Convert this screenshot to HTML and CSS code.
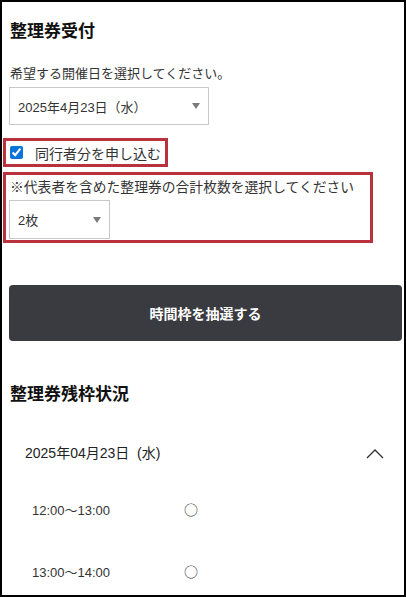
FILE: index.html
```html
<!DOCTYPE html>
<html lang="ja">
<head>
<meta charset="utf-8">
<title>整理券受付</title>
<link rel="stylesheet" href="styles.css">
</head>
<body>
<div class="frame">
  <h2 class="title">整理券受付</h2>
  <p class="label">希望する開催日を選択してください。</p>
  <div class="select date-select">
    <span>2025年4月23日（水）</span>
    <span class="arrow"></span>
  </div>

  <label class="redbox check-box">
    <input type="checkbox" checked>
    <span class="check-text">同行者分を申し込む</span>
  </label>

  <div class="redbox count-box">
    <p class="count-label">※代表者を含めた整理券の合計枚数を選択してください</p>
    <div class="select count-select">
      <span>2枚</span>
      <span class="arrow"></span>
    </div>
  </div>

  <button class="draw-btn">時間枠を抽選する</button>

  <h2 class="title title2">整理券残枠状況</h2>

  <div class="acc-head">
    <span>2025年04月23日&nbsp;&nbsp;(水)</span>
    <svg class="chev" width="18" height="11" viewBox="0 0 18 11"><polyline points="1,10 9,2 17,10" fill="none" stroke="#333" stroke-width="1.3"/></svg>
  </div>
  <div class="slots">
    <div class="slot"><span class="time">12:00〜13:00</span><span class="mark">○</span></div>
    <div class="slot"><span class="time">13:00〜14:00</span><span class="mark">○</span></div>
  </div>
</div>
</body>
</html>
```

FILE: styles.css
```css
html, body {
  margin: 0;
  padding: 0;
  background: #fff;
}
body {
  font-family: "Liberation Sans", "Noto Sans CJK JP", sans-serif;
  color: #222;
}
.frame {
  box-sizing: border-box;
  width: 406px;
  height: 597px;
  border: 2px solid #000;
  padding: 0 1px 0 7px;
  overflow: hidden;
  display: flex;
  flex-direction: column;
  align-items: flex-start;
}
.frame > * {
  flex-shrink: 0;
}
.title {
  margin: 16px 0 0 1px;
  font-size: 17px;
  line-height: 24px;
  font-weight: bold;
  color: #111;
  font-family: "Noto Sans CJK JP", sans-serif;
}
.label {
  margin: 21px 0 0 1px;
  font-size: 13px;
  line-height: 20px;
  color: #333;
  font-family: "Noto Sans CJK JP", sans-serif;
}
.select {
  box-sizing: border-box;
  border: 1px solid #c8c8c8;
  display: flex;
  align-items: center;
  justify-content: space-between;
  font-size: 13px;
  color: #333;
  padding: 0 8px 0 8px;
  background: #fff;
}
.date-select {
  margin-top: 4px;
  width: 200px;
  height: 38px;
}
.arrow {
  width: 0;
  height: 0;
  border-left: 4px solid transparent;
  border-right: 4px solid transparent;
  border-top: 6px solid #7a7a7a;
}
.redbox {
  box-sizing: border-box;
  border: 3px solid #b8313d;
  margin-left: -6px;
}
.check-box {
  margin-top: 13px;
  width: 165px;
  height: 29px;
  display: flex;
  align-items: center;
  padding-left: 4px;
}
.check-box input {
  margin: 0;
  width: 13px;
  height: 13px;
  accent-color: #0b74d8;
}
.check-text {
  margin-left: 12px;
  font-size: 14px;
  color: #333;
  font-family: "Noto Sans CJK JP", sans-serif;
}
.count-box {
  margin-top: 5px;
  width: 370px;
  padding: 1px 0 1px 3px;
}
.count-label {
  margin: 0 0 0 1px;
  font-size: 13.8px;
  line-height: 20px;
  color: #333;
  font-family: "Noto Sans CJK JP", sans-serif;
  white-space: nowrap;
}
.count-select {
  margin-top: 4px;
  width: 101px;
  height: 39px;
}
.draw-btn {
  margin-top: 42px;
  width: 393px;
  height: 56px;
  border: none;
  border-radius: 4px;
  background: #3a3b40;
  color: #fff;
  font-family: "Noto Sans CJK JP", sans-serif;
  font-weight: bold;
  font-size: 14px;
}
.title2 {
  margin-top: 40px;
}
.acc-head {
  box-sizing: border-box;
  margin-top: 38px;
  width: 393px;
  padding: 0 18px 0 16px;
  display: flex;
  align-items: center;
  justify-content: space-between;
  font-size: 14px;
  line-height: 20px;
  color: #222;
}
.slots {
  margin-top: 15px;
}
.slot {
  display: flex;
  align-items: center;
  height: 62px;
  padding-left: 23px;
  font-size: 13px;
  color: #333;
}
.time {
  width: 152px;
}
.mark {
  font-family: "Noto Sans CJK JP", sans-serif;
  font-size: 14px;
}
```
